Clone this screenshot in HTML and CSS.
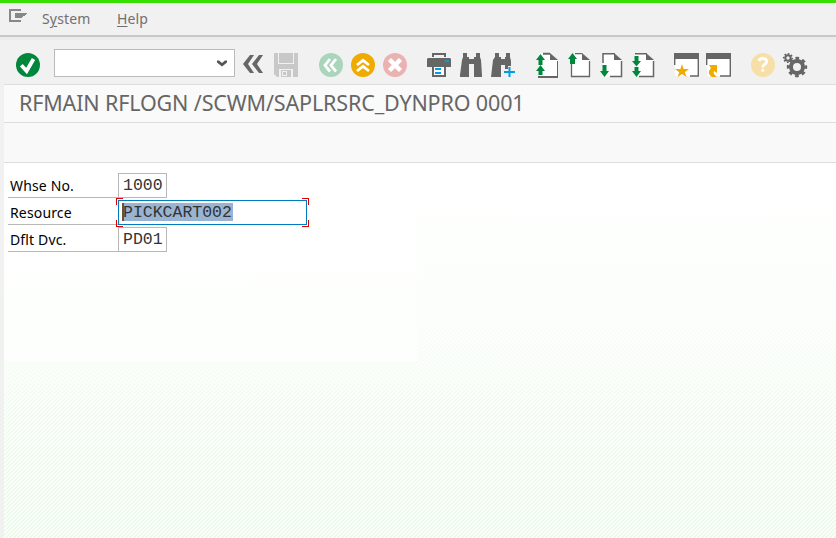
FILE: index.html
```html
<!DOCTYPE html>
<html lang="en">
<head>
<meta charset="utf-8">
<title>RFMAIN RFLOGN</title>
<link rel="stylesheet" href="styles.css">
</head>
<body>
<div class="window">
  <nav class="menubar">
    <svg class="exit" width="18" height="14" shape-rendering="crispEdges"><path d="M12 1H1v11h11" fill="none" stroke="#888" stroke-width="2"/><path d="M6 4h12v1h-1v1h-1v1h-2v1h-1v1H6z" fill="#888"/></svg>
    <span class="menu system">S<u>y</u>stem</span>
    <span class="menu help"><u>H</u>elp</span>
  </nav>
  <div class="toolbar">
    <svg class="icon ok" viewBox="0 0 24 24"><circle cx="12" cy="12" r="12" fill="#00873c"/><path d="M5.3 12.3 10.6 18 17.5 6" fill="none" stroke="#fff" stroke-width="3.8"/></svg>
    <div class="command"><svg width="12" height="8"><path d="M1 1.500h2L6 4l3-2.500h2v2L6 7.500l-5-4z" fill="#555"/></svg></div>
    <div class="group first">
      <svg class="icon" viewBox="0 0 24 24"><path d="M7 2h4L5 11l6 9H7L0 11zM16 2h4l-6 9 6 9h-4L9 11z" fill="#666"/></svg>
      <svg class="icon save" viewBox="0 0 24 24"><path d="M0 0h4v11h16V0h4v24h-5v-8H5v8H3l-3-3z" fill="#c8c8c8"/><path d="M5 0h14v10H5zM7 17h10v7H7z" fill="#c8c8c8"/><path d="M8 18h5v5H8z" fill="#f1f1f1"/><path d="M9 19h3v3H9z" fill="#c8c8c8"/></svg>
    </div>
    <div class="group">
      <svg class="icon" viewBox="0 0 24 24"><circle cx="12" cy="12" r="12" fill="#a9d5bb"/><path d="m11 6-5 6.300 5 6.200M17 6l-5 6.300 5 6.200" fill="none" stroke="#fff" stroke-width="2.800"/></svg>
      <svg class="icon" viewBox="0 0 24 24"><circle cx="12" cy="12" r="12" fill="#f0ab00"/><path d="m6 12 6-4.700 6 4.700M6 18l6-4.700 6 4.700" fill="none" stroke="#fff" stroke-width="2.800"/></svg>
      <svg class="icon" viewBox="0 0 24 24"><circle cx="12" cy="12" r="12" fill="#ebb2b2"/><path d="m6.500 6.500 11 11m0-11-11 11" fill="none" stroke="#fff" stroke-width="4.500"/></svg>
    </div>
    <div class="group">
      <svg class="icon" viewBox="0 0 24 24"><path d="M6 4V1h12v3" fill="none" stroke="#666" stroke-width="2"/><path d="M1 5h22l1 1v8h-5v-1H5v1H0V6z" fill="#666"/><path d="M6 14v9h12v-9" fill="#fff" stroke="#666" stroke-width="2"/><path d="M4 12h16v2H4z" fill="#666"/><path d="M18 7h4v2h-4zM8 15h6v2H8zM8 19h6v2H8z" fill="#009de0"/></svg>
      <svg class="icon" viewBox="0 0 24 24"><path d="M4 0h4v4h2v2h5V4h2V0h4v4l1 3 1 15v2h-8V11h-5v13H1v-2L3 7l1-3z" fill="#666"/></svg>
      <svg class="icon" viewBox="0 0 24 24"><path d="M4 0h4v4h2v2h4V4h1V0h4v4l1 4v5h-3v3h-3v-4h-4v12H0L2 7l2-3z" fill="#666"/><path d="M18.500 14v10M13 19h11" stroke="#009de0" stroke-width="2"/></svg>
    </div>
    <div class="group">
      <svg class="icon" viewBox="0 0 24 24"><path d="M4 0h11l8 8v16H4z" fill="#fff"/><path d="M8 .7h7M3 24h20" stroke="#666" stroke-width="2"/><path d="M22.500 8v16" stroke="#666"/><path d="M15 0l8 7H15z" fill="#666"/><path d="M5.500 1 10 7H7.500v5h-4V7H1zM5.500 12 10 18H7.500v4h-4v-4H1z" fill="#00873c"/></svg>
      <svg class="icon" viewBox="0 0 24 24"><path d="M4 1h11l8 7v15.500H4z" fill="#fff"/><path d="M8 .7h7M4.500 10v13.500h18V8" fill="none" stroke="#666" stroke-width="1.300"/><path d="M15 0l8 7H15z" fill="#666"/><path d="M5.500 0 10 6H8v5H3V6H1z" fill="#00873c"/></svg>
      <svg class="icon" viewBox="0 0 24 24"><path d="M4 1h11l8 7v15.500H4z" fill="#fff"/><path d="M4 10V.7h12M11 23.500h11.500V8" fill="none" stroke="#666" stroke-width="1.500"/><path d="M15 0l8 7H15z" fill="#666"/><path d="M3.500 12h4v6H10l-4.500 6L1 18h2.500z" fill="#00873c"/></svg>
      <svg class="icon" viewBox="0 0 24 24"><path d="M4 1h11l8 7v15.500H4z" fill="#fff"/><path d="M4 .7h12M8 23.500h14.500V8" fill="none" stroke="#666" stroke-width="1.500"/><path d="M15 0l8 7H15z" fill="#666"/><path d="M3.500 3h4v5H10l-4.500 5.500L1 8h2.500zM3.500 14h4v4H10l-4.500 6L1 18h2.500z" fill="#00873c"/></svg>
    </div>
    <div class="group">
      <svg class="icon" viewBox="0 0 24 24"><path d="M0 5h24v18H0z" fill="#fff"/><path d="M-1 0h25v6H-1z" fill="#666"/><path d="M-.3 5v7M23.300 5v18H15" fill="none" stroke="#666" stroke-width="1.400"/><path d="m7 11 1.600 5H14l-4.200 3.200L11.500 24 7 21l-4.500 3 1.700-4.800L0 16h5.400z" fill="#f0ab00"/></svg>
      <svg class="icon" viewBox="0 0 24 24"><path d="M0 5h24v18H0z" fill="#fff"/><path d="M-1 0h25v6H-1z" fill="#666"/><path d="M-.3 5v7M23.300 5v18H13" fill="none" stroke="#666" stroke-width="1.400"/><path d="M2 12h8v8l-3-2c-1 2 0 4 3 6H5c-4-3-4-6-1-9z" fill="#f0ab00"/></svg>
    </div>
    <div class="group">
      <svg class="icon" viewBox="0 0 24 24"><circle cx="12" cy="12" r="12" fill="#f7dfa8"/><path d="M8 8c1-4 8-3 7.500 1-.4 2.500-3.800 2.500-3.800 5.500M11.700 16v2.800" fill="none" stroke="#fff" stroke-width="2.800"/></svg>
      <svg class="icon" viewBox="0 0 24 24"><circle cx="14" cy="14" r="6" fill="none" stroke="#666" stroke-width="4"/><circle cx="14" cy="14" r="8.700" fill="none" stroke="#666" stroke-width="3" stroke-dasharray="3.600 3.230" stroke-dashoffset="1.800"/><circle cx="5" cy="5" r="2.700" fill="none" stroke="#666" stroke-width="2"/><circle cx="5" cy="5" r="4.300" fill="none" stroke="#666" stroke-width="1.600" stroke-dasharray="1.700 1.677" stroke-dashoffset=".85"/></svg>
    </div>
  </div>
  <main class="content">
    <h1 class="title"><span>RFMAIN RFLOGN /SCWM/SAPLRSRC_DYNPRO 0001</span></h1>
    <div class="appbar"></div>
    <section class="canvas">
      <div class="row"><label>Whse No.</label><div class="field">1000</div></div>
      <div class="row"><label>Resource</label><div class="field active"><span class="selected">PICKCART002</span><i class="corner tl"></i><i class="corner tr"></i><i class="corner bl"></i><i class="corner br"></i></div></div>
      <div class="row"><label>Dflt Dvc.</label><div class="field">PD01</div></div>
    </section>
  </main>
</div>
</body>
</html>
```
FILE: styles.css
```css
* { box-sizing: border-box; }
body { margin: 0; background: #f1f1f1; font-family: "Noto Sans", sans-serif; overflow: hidden; }
.window { width: 836px; height: 538px; display: flex; flex-direction: column; border-top: 3px solid #37e000; }
.menubar { height: 34px; flex: none; display: flex; align-items: flex-start; padding-left: 9px; border-bottom: 2px solid #c8c8c8; color: #707070; font-size: 14px; line-height: 20px; letter-spacing: .15px; }
.exit { margin-top: 6px; }
.menu { margin-top: 6px; white-space: nowrap; }
.menu u { text-underline-offset: 2px; text-decoration-thickness: 1px; }
.system { margin-left: 15px; width: 75px; }
.toolbar { height: 47px; flex: none; display: flex; align-items: flex-start; padding: 13px 0 0 16px; border-top: 3px solid #ebebeb; }
.icon { width: 24px; height: 24px; flex: none; display: block; overflow: visible; }
.command { width: 181px; height: 28px; margin: -4px 8px 0 14px; background: #fff; border: 1px solid #bbb; display: flex; align-items: center; justify-content: flex-end; padding-right: 6px; flex: none; }
.group { display: flex; gap: 8px; margin-right: 20px; }
.group.first { margin-right: 21px; }
.save { margin-left: -1px; }
.content { flex: 1; margin-left: 4px; display: flex; flex-direction: column; background: #fff; }
.title { margin: 0; height: 39px; background: #fafafa; border-top: 1px solid #ddd; border-bottom: 1px solid #ddd; padding-left: 15px; font-size: 21.5px; font-weight: 400; line-height: 36px; color: #666; white-space: nowrap; letter-spacing: -.14px; }
.appbar { height: 40px; background: #f9f9f9; border-bottom: 1px solid #ddd; }
.canvas {
  flex: 1;
  padding: 10px 0 0 4px;
  background:
    linear-gradient(#ffffff99, #ffffff99) 0 0 / 413px 198px no-repeat,
    linear-gradient(#fff 0, #ffffffe6 60px, #ffffff99 200px, #ffffff1a 376px),
    repeating-linear-gradient(135deg, #e7f8e5 0 1.414px, #fcfffb 1.414px 2.828px);
}
.row { display: flex; height: 27px; }
.row label { width: 110px; height: 25px; border-bottom: 1px solid #b8b8b8; padding-left: 2px; font-size: 14px; line-height: 25px; color: #000; white-space: nowrap; letter-spacing: .15px; }
.field { position: relative; width: 49px; height: 25px; border: 1px solid #b8b8b8; background: #fff; font: 16.5px/24px "Liberation Mono", monospace; padding-left: 4px; color: #333; }
.active { width: 189px; border-color: #007cc0; padding: 2px 0 0 3px; }
.selected { display: block; width: 111px; height: 18px; line-height: 19px; background: #99b3d2; border-left: 2px solid #68503a; text-indent: -1px; white-space: nowrap; }
.corner { position: absolute; width: 7px; height: 7px; border: 0 solid #d00; }
.tl { left: -3px; top: -3px; border-width: 1px 0 0 1px; }
.tr { right: -3px; top: -3px; border-width: 1px 1px 0 0; }
.bl { left: -3px; bottom: -3px; border-width: 0 0 1px 1px; }
.br { right: -3px; bottom: -3px; border-width: 0 1px 1px 0; }
```
